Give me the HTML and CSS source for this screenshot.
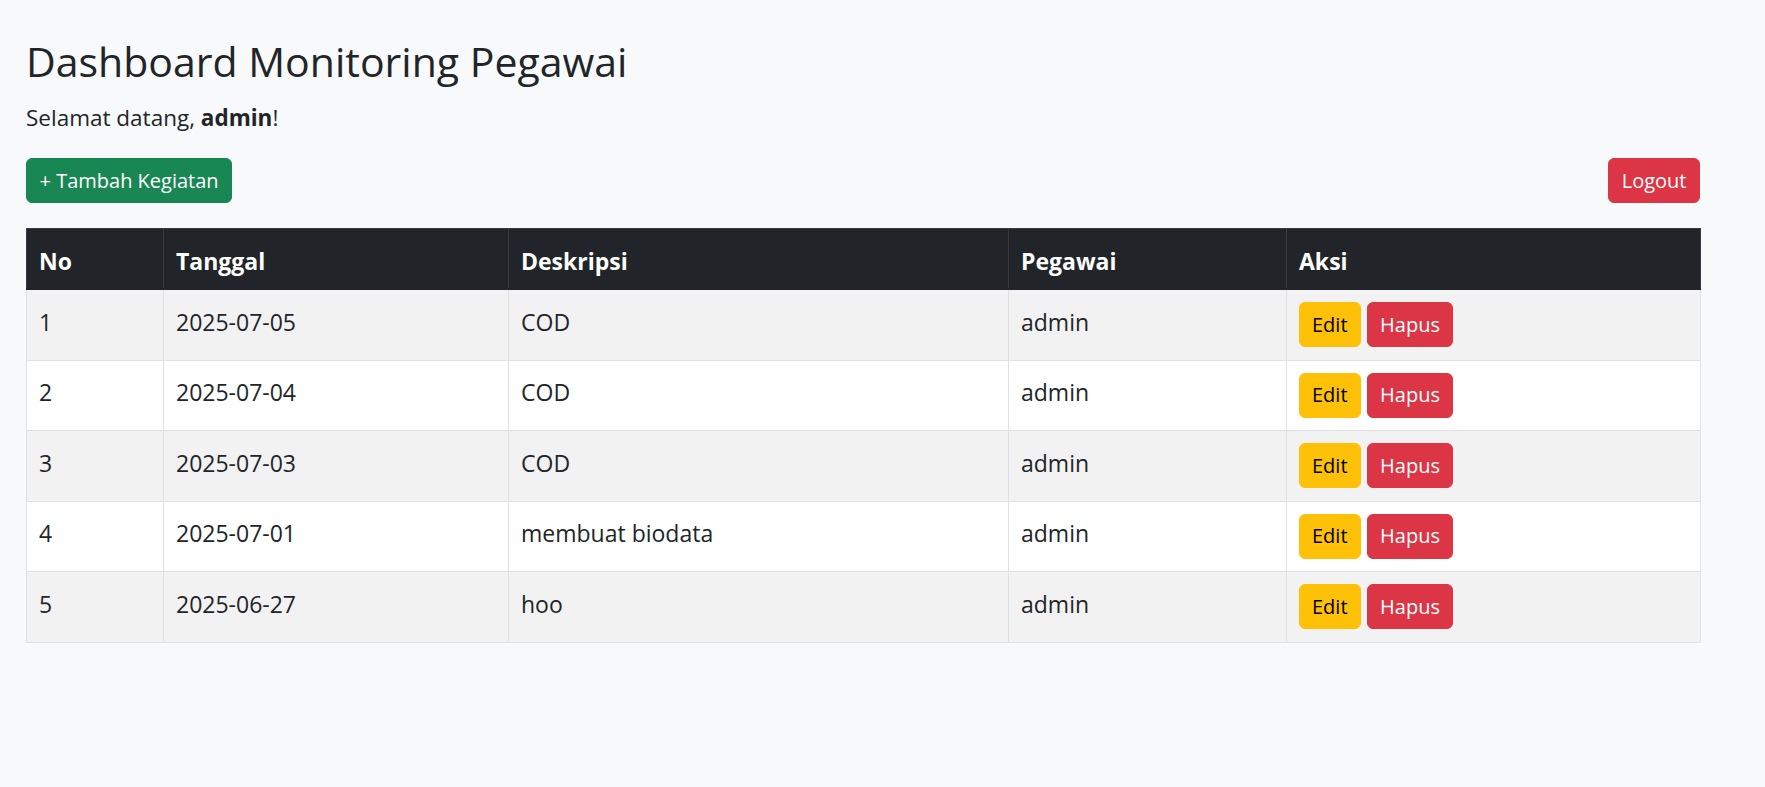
FILE: index.html
```html
<!DOCTYPE html>
<html lang="id">
<head>
<meta charset="utf-8">
<title>Dashboard Monitoring Pegawai</title>
<link rel="stylesheet" href="styles.css">
</head>
<body>
<main class="page">
  <h1 class="title">Dashboard Monitoring Pegawai</h1>
  <p class="welcome">Selamat datang, <strong>admin</strong>!</p>
  <div class="toolbar">
    <a class="btn btn-success" href="#">+ Tambah Kegiatan</a>
    <a class="btn btn-danger" href="#">Logout</a>
  </div>
  <table class="data">
    <colgroup>
      <col class="c-no"><col class="c-date"><col class="c-desc"><col class="c-emp"><col class="c-act">
    </colgroup>
    <thead>
      <tr><th>No</th><th>Tanggal</th><th>Deskripsi</th><th>Pegawai</th><th>Aksi</th></tr>
    </thead>
    <tbody>
      <tr><td>1</td><td>2025-07-05</td><td>COD</td><td>admin</td><td class="act"><div class="actions"><a class="btn btn-warning" href="#">Edit</a><a class="btn btn-danger" href="#">Hapus</a></div></td></tr>
      <tr><td>2</td><td>2025-07-04</td><td>COD</td><td>admin</td><td class="act"><div class="actions"><a class="btn btn-warning" href="#">Edit</a><a class="btn btn-danger" href="#">Hapus</a></div></td></tr>
      <tr><td>3</td><td>2025-07-03</td><td>COD</td><td>admin</td><td class="act"><div class="actions"><a class="btn btn-warning" href="#">Edit</a><a class="btn btn-danger" href="#">Hapus</a></div></td></tr>
      <tr><td>4</td><td>2025-07-01</td><td>membuat biodata</td><td>admin</td><td class="act"><div class="actions"><a class="btn btn-warning" href="#">Edit</a><a class="btn btn-danger" href="#">Hapus</a></div></td></tr>
      <tr><td>5</td><td>2025-06-27</td><td>hoo</td><td>admin</td><td class="act"><div class="actions"><a class="btn btn-warning" href="#">Edit</a><a class="btn btn-danger" href="#">Hapus</a></div></td></tr>
    </tbody>
  </table>
</main>
</body>
</html>
```

FILE: styles.css
```css
* { box-sizing: border-box; }

html, body {
  margin: 0;
  background: #f8f9fa;
  color: #212529;
  font-family: "Open Sans", "Noto Sans", "Liberation Sans", sans-serif;
}

.page {
  width: 1674px;
  margin-left: 26px;
  padding-top: 35px;
}

.title {
  margin: 0 0 13px;
  font-size: 41px;
  line-height: 53px;
  font-weight: 500;
}

.welcome {
  margin: 0 0 23px;
  font-size: 22.5px;
  line-height: 34px;
}

.welcome strong { font-weight: 700; }

.toolbar {
  display: flex;
  justify-content: space-between;
  align-items: center;
  margin-bottom: 25px;
}

.btn {
  display: inline-flex;
  align-items: center;
  height: 45px;
  padding: 0 12.5px;
  border: 1px solid transparent;
  border-radius: 6px;
  font-size: 20px;
  line-height: 1;
  text-decoration: none;
  white-space: nowrap;
}

.btn-success { background: #198754; border-color: #198754; color: #fff; }
.btn-danger { background: #dc3545; border-color: #dc3545; color: #fff; }
.btn-warning { background: #ffc107; border-color: #ffc107; color: #000; padding: 0 12px; }

.data {
  width: 1674px;
  table-layout: fixed;
  border-collapse: collapse;
  font-size: 23px;
  line-height: 34.5px;
}

.c-no { width: 137px; }
.c-date { width: 345px; }
.c-desc { width: 500px; }
.c-emp { width: 278px; }
.c-act { width: 414px; }

.data th {
  background: #212529;
  color: #fff;
  text-align: left;
  font-weight: 700;
  padding: 14.5px 12px 10px;
  border: 1px solid #373b3e;
  border-bottom: 2px solid #212529;
  vertical-align: top;
}

.data td {
  padding: 14.5px 12px 9.5px;
  border: 1px solid #dee2e6;
  vertical-align: top;
}

.data tbody tr:nth-child(odd) td { background: #f2f2f2; }
.data tbody tr:nth-child(even) td { background: #fff; }

.data td.act { padding: 12px 12px 12.5px; }

.actions {
  display: flex;
  gap: 6px;
}
```
